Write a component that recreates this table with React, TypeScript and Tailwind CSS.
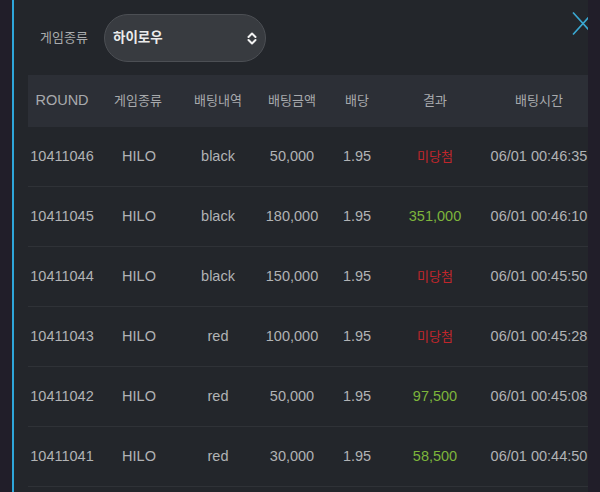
import React from "react";

type Row = {
    round: string;
    game: string;
    pick: string;
    amount: string;
    odds: string;
    result: string;
    win: boolean;
    time: string;
};

const rows: Row[] = [
    { round: "10411046", game: "HILO", pick: "black", amount: "50,000", odds: "1.95", result: "미당첨", win: false, time: "06/01 00:46:35" },
    { round: "10411045", game: "HILO", pick: "black", amount: "180,000", odds: "1.95", result: "351,000", win: true, time: "06/01 00:46:10" },
    { round: "10411044", game: "HILO", pick: "black", amount: "150,000", odds: "1.95", result: "미당첨", win: false, time: "06/01 00:45:50" },
    { round: "10411043", game: "HILO", pick: "red", amount: "100,000", odds: "1.95", result: "미당첨", win: false, time: "06/01 00:45:28" },
    { round: "10411042", game: "HILO", pick: "red", amount: "50,000", odds: "1.95", result: "97,500", win: true, time: "06/01 00:45:08" },
    { round: "10411041", game: "HILO", pick: "red", amount: "30,000", odds: "1.95", result: "58,500", win: true, time: "06/01 00:44:50" },
];

const headers = ["ROUND", "게임종류", "배팅내역", "배팅금액", "배당", "결과", "배팅시간"];

const cols = "grid grid-cols-[68px_84px_76px_72px_58px_98px_110px] w-[566px]";

const App = () => {
    return (
        <div
            className="flex h-[492px] w-[600px] overflow-hidden bg-[#211e29]"
            style={{ fontFamily: '"Liberation Sans", "Noto Sans CJK KR", sans-serif' }}
        >
            <div className="w-[12px] shrink-0" />
            <div className="w-[2px] shrink-0 bg-[#2ea6d9]" />
            <div className="relative flex-1 overflow-hidden bg-[#23262b] pl-[14px]">
                {/* close */}
                <svg
                    className="absolute right-[-6px] top-[12px]"
                    width="22"
                    height="23"
                    viewBox="0 0 22 23"
                    fill="none"
                    stroke="#3aa8d2"
                    strokeWidth="1.6"
                >
                    <path d="M1 0.5L21 22.5M21 0.5L1 22.5" />
                </svg>

                <div className="flex h-[75px] items-center pt-[1px]">
                    <span className="ml-[12px] w-[64px] text-[13px] text-[#a9abad]">게임종류</span>
                    <div className="flex h-[48px] w-[162px] items-center justify-between rounded-full border border-[#4c4f54] bg-[#383b40] pl-[8px] pr-[8px]">
                        <span className="text-[13.5px] font-bold text-[#ebebeb]">하이로우</span>
                        <svg width="10" height="13" viewBox="0 0 10 13" fill="none" stroke="#f2f2f2" strokeWidth="2" strokeLinecap="round" strokeLinejoin="round">
                            <path d="M1.5 5L5 1.5L8.5 5M1.5 8L5 11.5L8.5 8" />
                        </svg>
                    </div>
                </div>

                <div className={`${cols} h-[52px] items-center bg-[#2c2f36] text-center text-[#a8aaad]`}>
                    {headers.map((h, i) => (
                        <div key={h} className={i === 0 ? "text-[14.5px]" : "text-[13px]"}>
                            {h}
                        </div>
                    ))}
                </div>

                {rows.map((r) => (
                    <div
                        key={r.round}
                        className={`${cols} h-[60px] items-center border-b border-[#2f3237] text-center text-[14.5px] text-[#b1b3b5]`}
                    >
                        <div>{r.round}</div>
                        <div className="pl-[2px]">{r.game}</div>
                        <div>{r.pick}</div>
                        <div>{r.amount}</div>
                        <div>{r.odds}</div>
                        <div
                            className={
                                r.win ? "text-[#7db53b]" : "text-[13px] text-[#c0262c]"
                            }
                        >
                            {r.result}
                        </div>
                        <div className="whitespace-nowrap">{r.time}</div>
                    </div>
                ))}
            </div>
            <div className="w-[12px] shrink-0" />
        </div>
    );
};

export default App;
